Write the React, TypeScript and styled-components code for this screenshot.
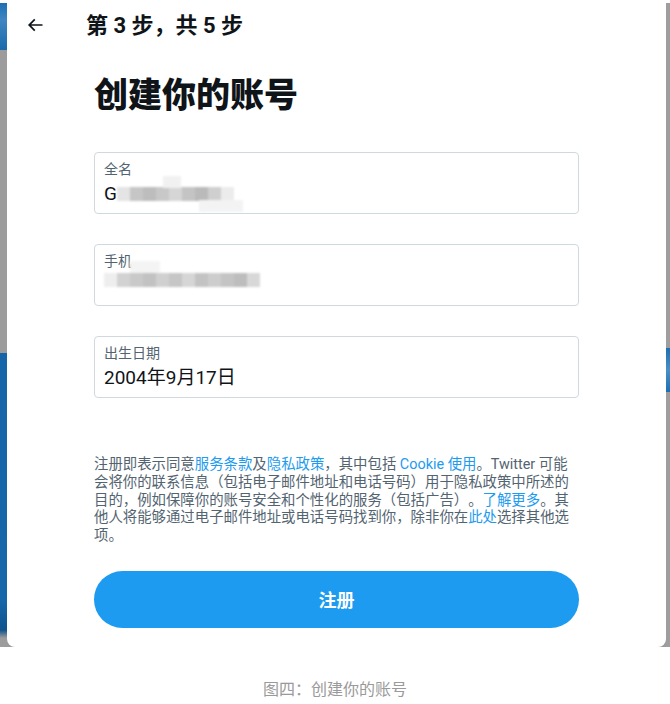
import React from "react";
import styled, { createGlobalStyle } from "styled-components";

const GlobalStyle = createGlobalStyle`
  html, body {
    margin: 0;
    padding: 0;
    background: #ffffff;
  }
  body {
    font-family: Roboto, "Noto Sans CJK SC", "Noto Sans", sans-serif;
    -webkit-font-smoothing: antialiased;
  }
  * { box-sizing: border-box; }
`;

const Page = styled.div`
  width: 670px;
  display: flex;
  flex-direction: column;
`;

const Backdrop = styled.div`
  height: 647px;
  display: flex;
  flex-direction: row;
  background: linear-gradient(
    to bottom,
    #ffffff 0px,
    #ffffff 3px,
    #9b9b9b 3px
  );
`;

const SideStrip = styled.div<{ $side: "left" | "right" }>`
  flex: 0 0 ${(p) => (p.$side === "left" ? "7px" : "4px")};
  background: ${(p) =>
    p.$side === "left"
      ? `linear-gradient(to bottom,
          #ffffff 0px, #ffffff 3px,
          #1d6fb2 3px, #3f86c2 20px, #1a69ab 50px,
          #9c9c9c 50px, #9c9c9c 353px,
          #1565a8 353px, #1667aa 600px, #10528c 630px,
          #9c9c9c 638px, #9c9c9c 647px)`
      : `linear-gradient(to bottom,
          #ffffff 0px, #ffffff 3px,
          #9e9e9e 3px, #9e9e9e 348px,
          #1d6fb2 348px, #4a8fc4 370px, #1d6fb2 392px,
          #9e9e9e 392px, #9e9e9e 647px)`};
`;

const Modal = styled.div`
  flex: 1;
  background: #ffffff;
  border-radius: 0 0 8px 8px;
  display: flex;
  flex-direction: column;
`;

const Header = styled.div`
  height: 50px;
  display: flex;
  align-items: center;
  padding-left: 18px;
`;

const BackButton = styled.div`
  width: 20px;
  height: 20px;
  display: flex;
  align-items: center;
  justify-content: center;
  margin-right: 41px;
  color: #0f1419;
`;

const StepText = styled.div`
  font-size: 22px;
  font-weight: 700;
  color: #0f1419;
  line-height: 26px;
  padding-top: 2px;
`;

const Body = styled.div`
  display: flex;
  flex-direction: column;
  padding: 0 87px;
`;

const Title = styled.h1`
  margin: 26px 0 38px;
  font-size: 34px;
  line-height: 38px;
  font-weight: 800;
  color: #0f1419;
`;

const Fields = styled.div`
  display: flex;
  flex-direction: column;
  gap: 30px;
`;

const Field = styled.div`
  height: 62px;
  border: 1px solid #cfd9de;
  border-radius: 4px;
  padding: 7px 9px 6px;
  display: flex;
  flex-direction: column;
`;

const Label = styled.div`
  font-size: 14px;
  line-height: 18px;
  color: #536471;
`;

const Value = styled.div`
  margin-top: 3px;
  font-size: 19px;
  line-height: 26px;
  color: #0f1419;
  display: flex;
  align-items: center;
`;

const Pixels = styled.span`
  display: inline-flex;
  position: relative;
  height: 14px;
  filter: blur(0.8px);
`;

const Cell = styled.span<{ $shade: string }>`
  width: 13px;
  height: 14px;
  background: ${(p) => p.$shade};
`;

const Halo = styled.span<{ $left: number; $top: number; $w: number; $shade: string }>`
  position: absolute;
  left: ${(p) => p.$left}px;
  top: ${(p) => p.$top}px;
  width: ${(p) => p.$w}px;
  height: 12px;
  background: ${(p) => p.$shade};
`;

const Terms = styled.p`
  margin: 58px 0 0;
  font-size: 14.4px;
  line-height: 17.75px;
  color: #536471;
  text-spacing-trim: space-all;
`;

const TermLink = styled.span`
  color: #1d9bf0;
`;

const SubmitButton = styled.button`
  margin: 26px 0 19px;
  height: 57px;
  border: none;
  border-radius: 9999px;
  background: #1d9bf0;
  color: #ffffff;
  font-family: Roboto, "Noto Sans CJK SC", sans-serif;
  font-size: 18px;
  font-weight: 700;
  display: flex;
  align-items: center;
  justify-content: center;
`;

const Caption = styled.div`
  margin-top: 32px;
  text-align: center;
  font-size: 16px;
  line-height: 22px;
  color: #9a9a9a;
`;

const BackArrow = () => (
  <svg width="20" height="20" viewBox="0 0 24 24" aria-hidden="true">
    <path
      fill="currentColor"
      d="M7.414 13l5.043 5.04-1.414 1.42L3.586 12l7.457-7.46 1.414 1.42L7.414 11H21v2H7.414z"
    />
  </svg>
);

const nameCells = ["#e4e4e4", "#c6c6c6", "#bdbdbd", "#c8c8c8", "#d6d6d6", "#c4c4c4", "#bababa", "#cfcfcf", "#ececec"];
const phoneCells = ["#eeeeee", "#d2d2d2", "#c9c9c9", "#c2c2c2", "#d0d0d0", "#c6c6c6", "#d6d6d6", "#c3c3c3", "#cdcdcd", "#c4c4c4", "#bdbdbd", "#d8d8d8"];

export default function App() {
  return (
    <>
      <GlobalStyle />
      <Page>
        <Backdrop>
          <SideStrip $side="left" />
          <Modal>
            <Header>
              <BackButton>
                <BackArrow />
              </BackButton>
              <StepText>第 3 步，共 5 步</StepText>
            </Header>
            <Body>
              <Title>创建你的账号</Title>
              <Fields>
                <Field>
                  <Label>全名</Label>
                  <Value>
                    G
                    <Pixels>
                      <Halo $left={46} $top={-11} $w={18} $shade="#f1f1f1" />
                      <Halo $left={82} $top={13} $w={44} $shade="#f3f3f3" />
                      {nameCells.map((c, i) => (
                        <Cell key={i} $shade={c} />
                      ))}
                    </Pixels>
                  </Value>
                </Field>
                <Field>
                  <Label>手机</Label>
                  <Value>
                    <Pixels>
                      <Halo $left={26} $top={-12} $w={30} $shade="#f4f4f4" />
                      {phoneCells.map((c, i) => (
                        <Cell key={i} $shade={c} />
                      ))}
                    </Pixels>
                  </Value>
                </Field>
                <Field>
                  <Label>出生日期</Label>
                  <Value>2004年9月17日</Value>
                </Field>
              </Fields>
              <Terms>
                注册即表示同意<TermLink>服务条款</TermLink>及<TermLink>隐私政策</TermLink>，其中包括{" "}
                <TermLink>Cookie 使用</TermLink>。Twitter
                可能会将你的联系信息（包括电子邮件地址和电话号码）用于隐私政策中所述的目的，例如保障你的账号安全和个性化的服务（包括广告）。
                <TermLink>了解更多</TermLink>。其他人将能够通过电子邮件地址或电话号码找到你，除非你在
                <TermLink>此处</TermLink>选择其他选项。
              </Terms>
              <SubmitButton type="button">注册</SubmitButton>
            </Body>
          </Modal>
          <SideStrip $side="right" />
        </Backdrop>
        <Caption>图四：创建你的账号</Caption>
      </Page>
    </>
  );
}
